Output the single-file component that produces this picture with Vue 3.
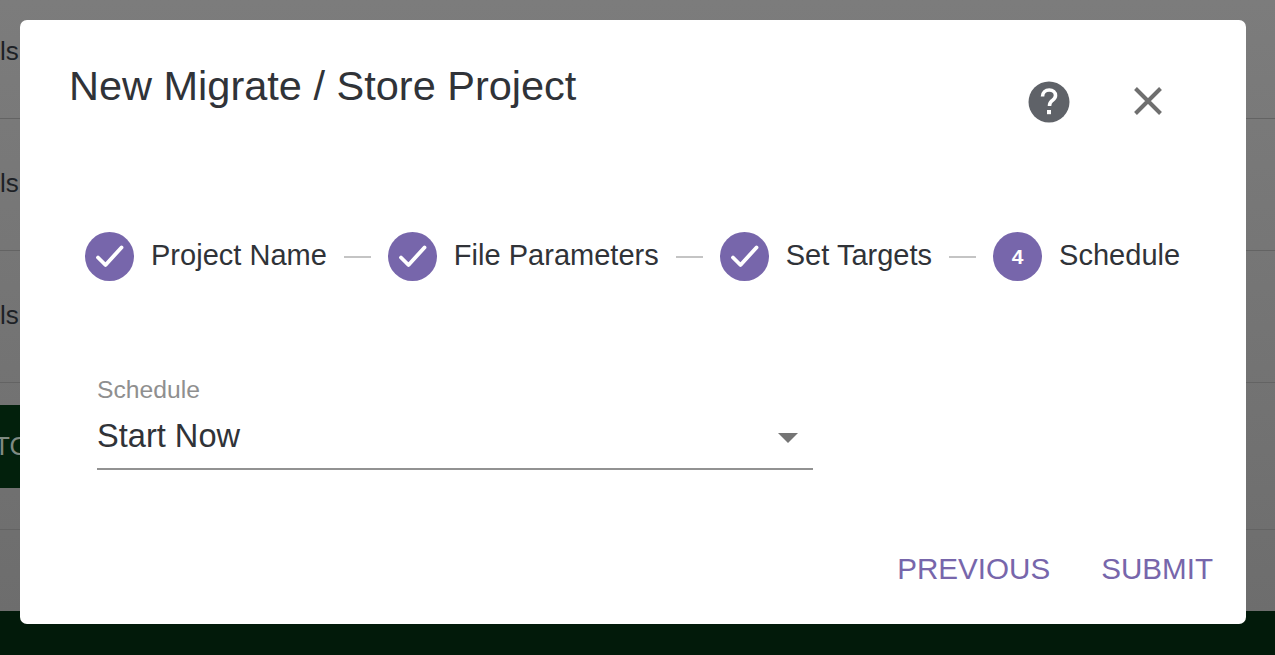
<script setup>
const steps = [
  { label: 'Project Name', done: true },
  { label: 'File Parameters', done: true },
  { label: 'Set Targets', done: true },
  { label: 'Schedule', done: false, num: 4 },
]
const rows = ['ls', 'ls', 'ls']
</script>

<template>
  <div class="page">
    <div class="bg">
      <div v-for="(r, i) in rows" :key="i" class="bg-row"><span>{{ r }}</span></div>
      <div class="bg-action"><div class="bg-btn">TO</div></div>
      <div class="bg-strip"></div>
      <div class="bg-footer"></div>
    </div>
    <div class="modal">
      <header class="head">
        <h2 class="title">New Migrate / Store Project</h2>
        <div class="tools">
          <svg class="help" viewBox="0 0 42 42" width="42" height="42">
            <circle cx="21" cy="21" r="20.5" fill="#5f6268" />
            <path d="M14.500 15.500c0-4 3-6.500 6.700-6.500 3.800 0 6.300 2.400 6.300 5.500 0 2.800-2 4-3.500 5.200-1.700 1.400-2.500 2.500-2.500 5.300" fill="none" stroke="#fff" stroke-width="3.600" />
            <rect x="19" y="29" width="4" height="4.200" fill="#fff" />
          </svg>
          <svg class="close" viewBox="0 0 28 28" width="28" height="28">
            <path d="M1.500 1.500 L26.500 26.500 M26.500 1.500 L1.500 26.500" stroke="#6f6f6f" stroke-width="4" fill="none" />
          </svg>
        </div>
      </header>

      <div class="stepper">
        <template v-for="(s, i) in steps" :key="s.label">
          <div class="step">
            <div class="dot">
              <svg v-if="s.done" viewBox="0 0 49 49" width="49" height="49">
                <path d="M13 25.500 L20.500 33 L36.500 15.500" stroke="#fff" stroke-width="3.800" stroke-linecap="round" stroke-linejoin="round" fill="none" />
              </svg>
              <span v-else class="num">{{ s.num }}</span>
            </div>
            <span class="label">{{ s.label }}</span>
          </div>
          <div v-if="i < steps.length - 1" class="line"></div>
        </template>
      </div>

      <div class="field">
        <div class="field-label">Schedule</div>
        <div class="select">
          <span class="value">Start Now</span>
          <i class="caret"></i>
        </div>
      </div>

      <div class="actions">
        <button class="btn">PREVIOUS</button>
        <button class="btn">SUBMIT</button>
      </div>
    </div>
  </div>
</template>

<style>
html, body { margin: 0; background: #767676; overflow: hidden; }
</style>

<style scoped>
.page {
  position: relative;
  width: 1275px;
  height: 655px;
  overflow: hidden;
  font-family: "Liberation Sans", Arial, sans-serif;
  background: linear-gradient(180deg, #7c7c7c, #6c6c6c);
}
.bg { display: flex; flex-direction: column; height: 100%; }
.bg-row {
  height: 132px;
  box-sizing: border-box;
  border-bottom: 1px solid #636363;
  display: flex;
  align-items: center;
  flex: none;
  color: #1d2126;
  font-size: 26px;
  padding-bottom: 3px;
}
.bg-row:first-child { height: 119px; padding-bottom: 15px; }
.bg-action {
  height: 147px;
  padding-top: 22px;
  box-sizing: border-box;
  flex: none;
  border-bottom: 1px solid #636363;
}
.bg-btn {
  height: 83px;
  width: 300px;
  background: #02200c;
  color: #7f8a82;
  font-size: 26px;
  line-height: 83px;
  margin-left: -6px;
}
.bg-strip { height: 81px; flex: none; }
.bg-footer { flex: 1; background: #021a0a; }

.modal {
  position: absolute;
  left: 20px;
  top: 20px;
  width: 1226px;
  height: 604px;
  background: #fff;
  border-radius: 7px;
  display: flex;
  flex-direction: column;
}
.head { display: flex; justify-content: space-between; height: 212px; flex: none; }
.title {
  margin: 44px 0 0 49px;
  font-weight: 400;
  font-size: 41.500px;
  line-height: 44px;
  color: #303338;
}
.tools { display: flex; align-items: flex-start; padding: 61px 84px 0 0; gap: 64px; }
.close { margin-top: 6px; }

.stepper { display: flex; align-items: center; height: 49px; padding-left: 65px; flex: none; }
.step { display: flex; align-items: center; flex: none; }
.dot {
  width: 49px;
  height: 49px;
  border-radius: 50%;
  background: #7766ab;
  display: flex;
  align-items: center;
  justify-content: center;
  flex: none;
}
.num { color: #fff; font-size: 21px; font-weight: 700; }
.label { margin: 0 0 3px 17px; font-size: 29px; letter-spacing: 0.015px; color: #303338; white-space: nowrap; }
.line { width: 27px; height: 2px; background: #c4c4c4; margin: 0 17px; flex: none; }

.field { width: 715.500px; margin: 97px 0 0 77px; flex: none; }
.field-label { font-size: 24.700px; line-height: 24px; color: #8f8f8f; }
.select {
  display: flex;
  align-items: center;
  justify-content: space-between;
  height: 66px;
  border-bottom: 2px solid #929292;
  font-size: 32.600px;
  color: #303338;
}
.value { margin-top: 2px; }
.caret {
  width: 0;
  height: 0;
  border-left: 10px solid transparent;
  border-right: 10px solid transparent;
  border-top: 10px solid #757575;
  margin: 6px 15px 0 0;
}

.actions { display: flex; justify-content: flex-end; gap: 51px; padding: 82px 33px 0 0; }
.btn {
  border: 0;
  background: none;
  padding: 0;
  font: inherit;
  font-size: 29.600px;
  line-height: 34px;
  color: #7766ab;
}
</style>
